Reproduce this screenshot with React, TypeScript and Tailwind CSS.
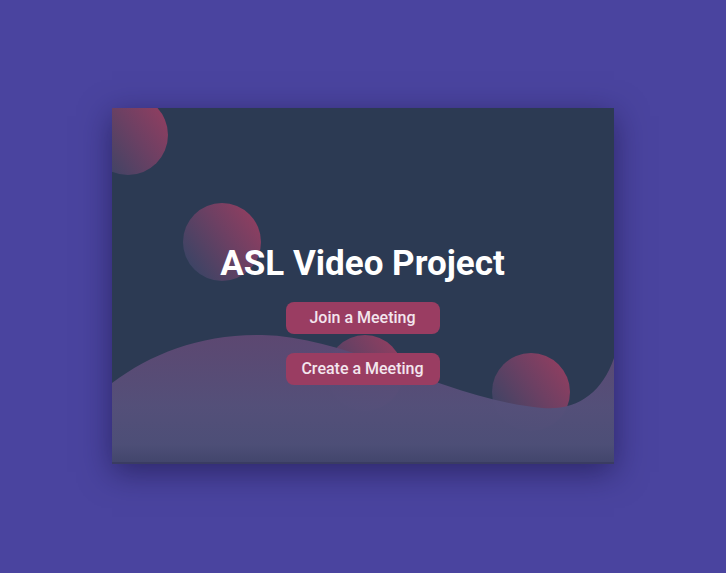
import React from 'react';

function Decor() {
  return (
    <svg className="absolute inset-0 h-full w-full" viewBox="0 0 502 356" preserveAspectRatio="none">
      <defs>
        <linearGradient id="ball" x1="1" y1="0.15" x2="0.05" y2="0.85">
          <stop offset="0" stopColor="#943e60" />
          <stop offset="0.45" stopColor="#6c4063" />
          <stop offset="1" stopColor="#384465" />
        </linearGradient>
        <linearGradient id="wave" x1="0" y1="0" x2="0" y2="1">
          <stop offset="0" stopColor="#5e4872" />
          <stop offset="0.55" stopColor="#55507a" />
          <stop offset="0.85" stopColor="#4e4f78" />
          <stop offset="1" stopColor="#42456c" />
        </linearGradient>
      </defs>
      <circle cx="16" cy="27" r="40" fill="url(#ball)" />
      <circle cx="110" cy="134" r="39" fill="url(#ball)" />
      <circle cx="253" cy="265" r="38" fill="url(#ball)" />
      <circle cx="419" cy="284" r="39" fill="url(#ball)" />
      <path
        d="M0 275 C 40 245 90 226 150 227 C 240 229 330 290 430 300 C 465 303 490 285 502 250 V356 H0 Z"
        fill="url(#wave)"
        fillOpacity="0.97"
      />
    </svg>
  );
}

export default function App() {
  return (
    <main className="flex h-[573px] w-[726px] items-start justify-center bg-[#4a449f] pt-[108px]" style={{ fontFamily: 'Roboto, "Liberation Sans", sans-serif' }}>
      <div className="relative ml-[-1px] h-[356px] w-[502px] overflow-hidden bg-[#2c3a53] shadow-[0_8px_30px_rgba(20,15,60,0.55)]">
        <Decor />
        <div className="relative flex flex-col items-center pt-[135px]">
          <h1 className="text-[35px] font-bold leading-[42px] text-white">ASL Video Project</h1>
          <button className="mt-[17px] h-8 w-[154px] rounded-lg bg-[#9a3d62] text-[16px] font-medium text-[#f3e6ee]">Join a Meeting</button>
          <button className="mt-[19px] h-8 w-[154px] rounded-lg bg-[#9a3d62] text-[16px] font-medium text-[#f3e6ee]">Create a Meeting</button>
        </div>
        <div className="absolute bottom-0 left-0 h-[2px] w-full bg-[#3a3c62]" />
      </div>
    </main>
  );
}
